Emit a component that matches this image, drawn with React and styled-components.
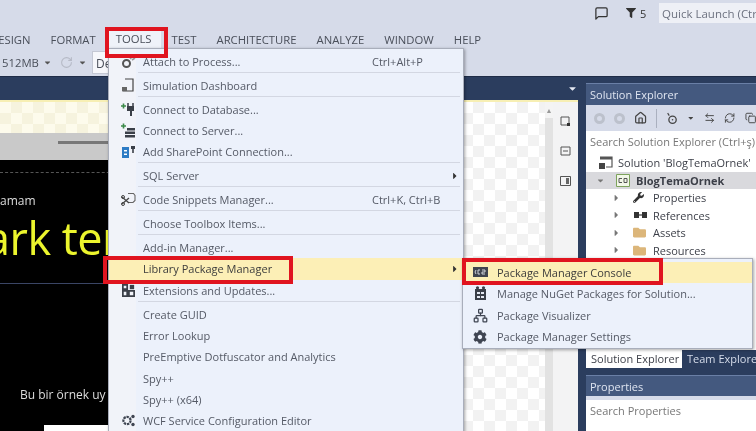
import React from 'react'
import styled, { createGlobalStyle } from 'styled-components'
import { FaCog, FaFolder, FaWrench, FaFilter, FaCaretRight, FaCaretDown } from 'react-icons/fa'
import { LuMessageSquare, LuRotateCw, LuNetwork, LuCopy, LuRefreshCw, LuArrowLeftRight, LuHouse } from 'react-icons/lu'

const Global = createGlobalStyle`
  html, body { margin: 0; padding: 0; background: #d6dbe9; }
  * { box-sizing: border-box; }
`

const NAVY = '#2b3d5e'

const Page = styled.div`
  position: relative;
  width: 756px;
  height: 431px;
  overflow: hidden;
  display: flex;
  flex-direction: column;
  background: #d6dbe9;
  color: #4a4f5a;
  font-family: "Open Sans", "Noto Sans", sans-serif;
  font-size: 11px;
  filter: blur(0.55px);
`

const TitleRow = styled.div`
  height: 30px;
  display: flex;
  justify-content: flex-end;
  padding-top: 3px;
`
const TitleIcon = styled.div`
  width: ${p => p.$w}px;
  height: 20px;
  display: flex;
  align-items: center;
  gap: 4px;
  color: #333;
`
const QuickLaunch = styled.div`
  width: 97px;
  height: 20px;
  padding: 3px 3px;
  background: #eef0f6;
  color: #6d7280;
  font-size: 11.5px;
  white-space: nowrap;
  overflow: hidden;
`

const MenuBar = styled.div`
  height: 18px;
  margin-left: -10px;
  display: flex;
  gap: 20px;
  align-items: center;
  font-size: 11.3px;
  color: #4a4f5a;
`
const MenuName = styled.span`
  white-space: nowrap;
  ${p => p.$open && `
    height: 18px;
    margin: 0 -9px;
    padding: 1px 9px;
    background: #eff2f9;
  `}
`

const Toolbar = styled.div`
  height: 28px;
  margin-left: -8px;
  display: flex;
  align-items: center;
  font-size: 11.3px;
`
const Memory = styled.span`
  margin-right: 4px;
  white-space: nowrap;
`
const SmallCaret = styled.span`
  display: flex;
  margin-right: ${p => p.$mr || 0}px;
  color: #555;
`
const RefreshIcon = styled.span`
  display: flex;
  margin-right: 5px;
  color: #b6bac6;
`
const ComboBox = styled.div`
  width: 40px;
  height: 23px;
  padding: 3px;
  font-size: 12px;
  background: #f6f7fb;
  border: 1px solid #c4c8d4;
`

const Workspace = styled.div`
  flex: 1;
  min-height: 0;
  display: flex;
  background: ${NAVY};
  border-top: 1px solid #1f2c47;
`
const DocWell = styled.div`
  width: 578px;
  display: flex;
  flex-direction: column;
`
const DocTabs = styled.div`
  height: 23px;
  display: flex;
  justify-content: flex-end;
  align-items: center;
  color: #e4e8f2;
`
const DocBody = styled.div`
  flex: 1;
  min-height: 0;
  display: flex;
  border-top: 2px solid #f7efb4;
`
const Surface = styled.div`
  width: 545px;
  display: flex;
  flex-direction: column;
  background: repeating-conic-gradient(#f2f2f2 0 25%, #fff 0 50%) 0 0 / 22px 22px;
`
const SurfaceTop = styled.div`
  height: 31px;
  width: 120px;
  background: repeating-conic-gradient(#f6f3de 0 25%, #fdfbec 0 50%) 0 0 / 22px 22px;
`
const RulerStrip = styled.div`
  width: 120px;
  height: 27px;
  padding: 8px 0 0 58px;
  background: #c9c9c9;
`
const RulerLine = styled.div`
  height: 3px;
  background: #777;
`
const DarkPage = styled.div`
  width: 120px;
  flex: 1;
  display: flex;
  flex-direction: column;
  background: #000;
  color: #eee;
`
const DashLine = styled.div`
  margin-top: 12px;
  border-top: 1px dashed #555;
`
const PageLabel = styled.div`
  margin-top: 19px;
  height: 18px;
  font-size: 12px;
  white-space: nowrap;
  color: #ddd;
`
const PageTitle = styled.div`
  height: 74px;
  font-size: 45px;
  line-height: 56px;
  letter-spacing: -0.5px;
  text-indent: -15px;
  white-space: nowrap;
  color: #ecf52d;
  overflow: hidden;
  border-bottom: 1px solid #3a4565;
`
const PageText = styled.div`
  margin-top: 102px;
  padding-left: 20px;
  height: 18px;
  font-size: 12px;
  white-space: nowrap;
  color: #ddd;
`
const WhiteBox = styled.div`
  margin: 21px 0 0 44px;
  flex: 1;
  background: #fff;
`
const ScrollTrack = styled.div`
  width: 8px;
  background: #e2e2e2;
`
const ScrollArrow = styled.div`
  height: 16px;
  background: #f4f4f4;
  color: #999;
  display: flex;
  align-items: center;
  justify-content: center;
  font-size: 7px;
`
const SideStrip = styled.div`
  flex: 1;
  display: flex;
  flex-direction: column;
  align-items: center;
  padding-top: 13px;
  gap: 18px;
  background: #f3f3f4;
`
const SideIcon = styled.svg`
  width: 11px;
  height: 12px;
  flex: none;
`

const Dock = styled.div`
  width: 178px;
  padding: 6px 0 0 8px;
  display: flex;
  flex-direction: column;
`
const PaneHeader = styled.div`
  height: ${p => p.$h}px;
  padding: 3px 4px;
  background: #44597f;
  border-top: 1px solid #6a7fa6;
  color: #dfe5f1;
`
const ExplorerTools = styled.div`
  height: 26px;
  display: flex;
  align-items: center;
  gap: 9px;
  padding-left: 8px;
  background: #d6dbe9;
  color: #444;
  overflow: hidden;
`
const ToolDot = styled.span`
  width: 11px;
  height: 11px;
  flex: none;
  border-radius: 50%;
  border: 3px solid #bcc1cc;
`
const ToolSep = styled.span`
  width: 1px;
  height: 19px;
  flex: none;
  background: #aab0bf;
`
const SearchInput = styled.div`
  height: ${p => p.$h}px;
  padding: 3px 4px;
  background: #fff;
  color: #777;
  white-space: nowrap;
  overflow: hidden;
`
const Tree = styled.div`
  height: 198px;
  padding-top: 2px;
  background: #fff;
`
const TreeRow = styled.div`
  height: 17.5px;
  display: flex;
  align-items: center;
  gap: 4px;
  padding-left: ${p => p.$indent}px;
  background: ${p => (p.$selected ? '#d9d9dd' : 'transparent')};
  font-weight: ${p => (p.$selected ? 700 : 400)};
  color: #3c3f48;
  white-space: nowrap;
`
const Twist = styled.span`
  width: 9px;
  margin-right: ${p => p.$mr}px;
  display: flex;
  color: #777;
`
const TreeIcon = styled.span`
  width: 16px;
  display: flex;
  align-items: center;
  color: ${p => p.$color || '#333'};
`
const TabsRow = styled.div`
  height: 18px;
  display: flex;
  color: #d5dcea;
`
const PaneTab = styled.div`
  padding: 1px 5px;
  width: ${p => p.$w}px;
  white-space: nowrap;
  background: ${p => (p.$on ? '#fff' : 'transparent')};
  color: ${p => (p.$on ? '#3c3f48' : '#d5dcea')};
`
const PropsPane = styled.div`
  margin-top: 7px;
  flex: 1;
  display: flex;
  flex-direction: column;
`
const PropsGap = styled.div`
  height: 4px;
  background: #d6dbe9;
`
const PropsBody = styled.div`
  flex: 1;
  background: #fff;
`

/* dropdowns that lie over the workspace */
const DropDown = styled.div`
  position: absolute;
  left: 108px;
  top: 48px;
  width: 356px;
  height: 390px;
  padding-top: 1.5px;
  background: linear-gradient(90deg, #f1f3f9 0, #f1f3f9 27px, #ecf1fb 27px);
  border: 1px solid #a9aebb;
  box-shadow: 1px 1px 3px rgba(0, 0, 0, 0.35);
`
const Row = styled.div`
  height: 21.3px;
  display: grid;
  grid-template-columns: 34px 229px 78px 1fr;
  align-items: center;
  white-space: nowrap;
  background: ${p => (p.$on ? '#fcefb6' : 'transparent')};
  color: ${p => (p.$on ? '#3c3c3c' : '#555a66')};
`
const RowIcon = styled.span`
  display: flex;
  justify-content: center;
  padding-left: 4px;
  color: #3f4552;
`
const Arrow = styled.span`
  display: flex;
  color: #333;
`
const Sep = styled.div`
  height: 2.7px;
  margin-left: 29px;
  margin-right: 3px;
  border-top: 1px solid #d3d7e2;
`
const SubMenu = styled.div`
  position: absolute;
  left: 462px;
  top: 258px;
  width: 291px;
  height: 91px;
  padding-top: 3px;
  background: #ecf1fb;
  border: 1px solid #a9aebb;
  box-shadow: 1px 1px 3px rgba(0, 0, 0, 0.35);
`
const SubRow = styled.div`
  height: 21.3px;
  display: flex;
  align-items: center;
  white-space: nowrap;
  background: ${p => (p.$on ? '#fcefb6' : 'transparent')};
  color: ${p => (p.$on ? '#3c3c3c' : '#555a66')};
`
const SubIcon = styled.span`
  width: 34px;
  display: flex;
  justify-content: center;
  color: #3f4552;
`
const RedBox = styled.div`
  position: absolute;
  left: ${p => p.$x}px;
  top: ${p => p.$y}px;
  width: ${p => p.$w}px;
  height: ${p => p.$h}px;
  border: 4px solid #e0141f;
`

const Svg = ({ children, size = 15 }) => (
  <svg width={size} height={size} viewBox="0 0 15 15">{children}</svg>
)

const AttachIcon = () => (
  <Svg>
    <circle cx="5.5" cy="9.5" r="3.5" fill="none" stroke="#555" strokeWidth="2" />
    <path d="M9 5l3-3M11 6l3-2" stroke="#999" strokeWidth="1.6" />
  </Svg>
)
const DashIcon = () => (
  <Svg>
    <path d="M4 1h8v12H2v-3" fill="none" stroke="#444" strokeWidth="1.2" />
    <path d="M1 9h5v4H1z" fill="#666" />
  </Svg>
)
const DbPlugIcon = () => (
  <Svg>
    <path d="M0 4h5M2.5 1.5v5" stroke="#3c8a4a" strokeWidth="1.6" />
    <path d="M6 4h7v5H11v5H9V9H6z" fill="#3a3f48" />
    <path d="M7 1v3M12 1v3" stroke="#3a3f48" strokeWidth="1.5" />
  </Svg>
)
const ServerIcon = () => (
  <Svg>
    <path d="M0 3h5M2.5 .5v5" stroke="#3c8a4a" strokeWidth="1.6" />
    <path d="M6 5h8v2.5H6zM4 8.5h10V11H4zM4 12h10v2.5H4z" fill="#3a3f48" />
  </Svg>
)
const SharePointIcon = () => (
  <Svg>
    <path d="M1 3h7v11H1z" fill="#2d7bc4" />
    <path d="M3 6h3v1.5H3zM3 9.5h3V11H3z" fill="#fff" />
    <path d="M10 2h4v3h-1.2v4h-1.6V5H10z" fill="#3a3f48" />
  </Svg>
)
const SnippetIcon = () => (
  <Svg>
    <path d="M7 1.5h5.5l1.5 2v5l-2 2H8" fill="none" stroke="#666" strokeWidth="1.1" />
    <path d="M1 5l7 6M1 12l7-6" stroke="#444" strokeWidth="1.3" />
    <circle cx="2" cy="5" r="1.5" fill="none" stroke="#444" />
    <circle cx="2" cy="12" r="1.5" fill="none" stroke="#444" />
  </Svg>
)
const ExtIcon = () => (
  <Svg size={13}>
    <path d="M1 1h5v5H1zM1 8h5v6H1zM8 8h6v6H8z" fill="none" stroke="#3a3f48" strokeWidth="2" />
    <path d="M9 1h5v5H9z" fill="#3a3f48" />
  </Svg>
)
const WcfIcon = () => (
  <Svg>
    <circle cx="6" cy="7.5" r="3.6" fill="none" stroke="#3f4552" strokeWidth="2.2" strokeDasharray="2.4 .8" />
    <circle cx="12" cy="3.5" r="1.7" fill="#3f4552" />
    <circle cx="12" cy="11.5" r="1.7" fill="#3f4552" />
  </Svg>
)
const ConsoleIcon = () => (
  <svg width="15" height="12" viewBox="0 0 15 12">
    <path d="M0 0h15v10H0z" fill="#3f444e" />
    <path d="M3 3L2 5l1 2M7 3H5v4h2M9 3h3v2H9v2h3" fill="none" stroke="#dfe2e8" strokeWidth="0.9" />
  </svg>
)
const NugetIcon = () => (
  <Svg>
    <path d="M2 3h11v11H2z" fill="#3a3f48" />
    <circle cx="4.5" cy="1.8" r="1.6" fill="#3a3f48" />
    <circle cx="10.5" cy="1.8" r="1.6" fill="#3a3f48" />
    <path d="M4 6h3v2H4zM8 6h3v2H8zM4 10h3v2H4zM8 10h3v2H8z" fill="#e4e8f2" />
  </Svg>
)
const SolutionIcon = () => (
  <Svg>
    <path d="M2 2h12v10H8" fill="none" stroke="#555" strokeWidth="1.2" />
    <path d="M2 2h12v2.5H2z" fill="#555" />
    <path d="M1 8h6v6H1z" fill="#444" />
  </Svg>
)
const ProjectIcon = () => (
  <svg width="14" height="13" viewBox="0 0 14 13">
    <path d="M.5 .5h13v12H.5z" fill="#f2f7e8" stroke="#7da35c" />
    <path d="M3 4.5H6M3 4.5v4H6M8 4.5h3v4H8z" fill="none" stroke="#555" />
  </svg>
)
const RefsIcon = () => (
  <Svg>
    <path d="M1 4h5v6H1zM9 4h5v6H9z" fill="#333" />
    <path d="M6 6h3v2H6z" fill="#888" />
  </Svg>
)
const ShowAllIcon = () => (
  <Svg size={13}>
    <circle cx="8" cy="9" r="4.5" fill="none" stroke="#444" strokeWidth="1.6" />
    <circle cx="8" cy="9" r="1" fill="#444" />
    <path d="M2 1l2 3" stroke="#444" strokeWidth="1.4" />
  </Svg>
)

const rows = [
  { t: 'Attach to Process...', k: 'Ctrl+Alt+P', i: <AttachIcon /> },
  'sep',
  { t: 'Simulation Dashboard', i: <DashIcon /> },
  'sep',
  { t: 'Connect to Database...', i: <DbPlugIcon /> },
  { t: 'Connect to Server...', i: <ServerIcon /> },
  { t: 'Add SharePoint Connection...', i: <SharePointIcon /> },
  'sep',
  { t: 'SQL Server', sub: true },
  'sep',
  { t: 'Code Snippets Manager...', k: 'Ctrl+K, Ctrl+B', i: <SnippetIcon /> },
  'sep',
  { t: 'Choose Toolbox Items...' },
  'sep',
  { t: 'Add-in Manager...' },
  { t: 'Library Package Manager', sub: true, on: true },
  { t: 'Extensions and Updates...', i: <ExtIcon /> },
  'sep',
  { t: 'Create GUID' },
  { t: 'Error Lookup' },
  { t: 'PreEmptive Dotfuscator and Analytics' },
  { t: 'Spy++' },
  { t: 'Spy++ (x64)' },
  { t: 'WCF Service Configuration Editor', i: <WcfIcon /> },
]

const subRows = [
  { t: 'Package Manager Console', i: <ConsoleIcon />, on: true },
  { t: 'Manage NuGet Packages for Solution...', i: <NugetIcon /> },
  { t: 'Package Visualizer', i: <LuNetwork size={15} /> },
  { t: 'Package Manager Settings', i: <FaCog size={14} /> },
]

const menus = ['DESIGN', 'FORMAT', 'TOOLS', 'TEST', 'ARCHITECTURE', 'ANALYZE', 'WINDOW', 'HELP']

export default function App() {
  return (
    <Page>
      <Global />
      <TitleRow>
        <TitleIcon $w={32}><LuMessageSquare size={15} /></TitleIcon>
        <TitleIcon $w={33}><FaFilter size={10} />5</TitleIcon>
        <QuickLaunch>Quick Launch (Ctrl+Q)</QuickLaunch>
      </TitleRow>
      <MenuBar>
        {menus.map(m => <MenuName key={m} $open={m === 'TOOLS'}>{m}</MenuName>)}
      </MenuBar>
      <Toolbar>
        <Memory>A 512MB</Memory>
        <SmallCaret $mr={8}><FaCaretDown size={9} /></SmallCaret>
        <RefreshIcon><LuRotateCw size={13} /></RefreshIcon>
        <SmallCaret $mr={5}><FaCaretDown size={9} /></SmallCaret>
        <ComboBox>De</ComboBox>
      </Toolbar>
      <Workspace>
        <DocWell>
          <DocTabs><FaCaretDown size={11} /></DocTabs>
          <DocBody>
            <Surface>
              <SurfaceTop />
              <RulerStrip><RulerLine /></RulerStrip>
              <DarkPage>
                <DashLine />
                <PageLabel>amam</PageLabel>
                <PageTitle>ark ter</PageTitle>
                <PageText>Bu bir örnek uy</PageText>
                <WhiteBox />
              </DarkPage>
            </Surface>
            <ScrollTrack><ScrollArrow>▲</ScrollArrow></ScrollTrack>
            <SideStrip>
              <SideIcon viewBox="0 0 11 12"><path d="M1 2h8v8H1z" fill="none" stroke="#555" /><path d="M7 8h3v3H7z" fill="#333" /></SideIcon>
              <SideIcon viewBox="0 0 11 12"><path d="M1 2h9v8H1z" fill="none" stroke="#555" /><path d="M3 6h5" stroke="#555" /></SideIcon>
              <SideIcon viewBox="0 0 11 12"><path d="M.5 1.5h10v9H.5z" fill="none" stroke="#555" /><path d="M6 3h3v6H6z" fill="#666" /></SideIcon>
            </SideStrip>
          </DocBody>
        </DocWell>
        <Dock>
          <PaneHeader $h={22}>Solution Explorer</PaneHeader>
          <ExplorerTools>
            <ToolDot />
            <ToolDot />
            <LuHouse size={14} strokeWidth={2.2} />
            <ToolSep />
            <ShowAllIcon />
            <FaCaretDown size={8} />
            <LuArrowLeftRight size={12} />
            <LuRefreshCw size={12} />
            <LuCopy size={12} />
          </ExplorerTools>
          <SearchInput $h={21}>Search Solution Explorer (Ctrl+ş)</SearchInput>
          <Tree>
            <TreeRow $indent={12}><TreeIcon><SolutionIcon /></TreeIcon>Solution 'BlogTemaOrnek'</TreeRow>
            <TreeRow $indent={10} $selected><Twist $mr={7}><FaCaretDown size={9} /></Twist><TreeIcon><ProjectIcon /></TreeIcon>BlogTemaOrnek</TreeRow>
            <TreeRow $indent={26}><Twist $mr={8}><FaCaretRight size={10} /></Twist><TreeIcon><FaWrench size={11} /></TreeIcon>Properties</TreeRow>
            <TreeRow $indent={26}><Twist $mr={8}><FaCaretRight size={10} /></Twist><TreeIcon><RefsIcon /></TreeIcon>References</TreeRow>
            <TreeRow $indent={26}><Twist $mr={8}><FaCaretRight size={10} /></Twist><TreeIcon $color="#dcb67a"><FaFolder size={13} /></TreeIcon>Assets</TreeRow>
            <TreeRow $indent={26}><Twist $mr={8}><FaCaretRight size={10} /></Twist><TreeIcon $color="#dcb67a"><FaFolder size={13} /></TreeIcon>Resources</TreeRow>
          </Tree>
          <TabsRow>
            <PaneTab $w={96} $on>Solution Explorer</PaneTab>
            <PaneTab $w={74}>Team Explorer</PaneTab>
          </TabsRow>
          <PropsPane>
            <PaneHeader $h={21}>Properties</PaneHeader>
            <PropsGap />
            <SearchInput $h={18}>Search Properties</SearchInput>
            <PropsBody />
          </PropsPane>
        </Dock>
      </Workspace>

      <DropDown>
        {rows.map((r, i) =>
          r === 'sep' ? <Sep key={i} /> : (
            <Row key={i} $on={r.on}>
              <RowIcon>{r.i}</RowIcon>
              <span>{r.t}</span>
              <span>{r.k}</span>
              {r.sub && <Arrow><FaCaretRight size={10} /></Arrow>}
            </Row>
          )
        )}
      </DropDown>
      <SubMenu>
        {subRows.map(r => (
          <SubRow key={r.t} $on={r.on}>
            <SubIcon>{r.i}</SubIcon>
            {r.t}
          </SubRow>
        ))}
      </SubMenu>
      <RedBox $x={105} $y={27} $w={63} $h={31} />
      <RedBox $x={103} $y={256} $w={190} $h={28} />
      <RedBox $x={462} $y={258} $w={201} $h={27} />
    </Page>
  )
}
